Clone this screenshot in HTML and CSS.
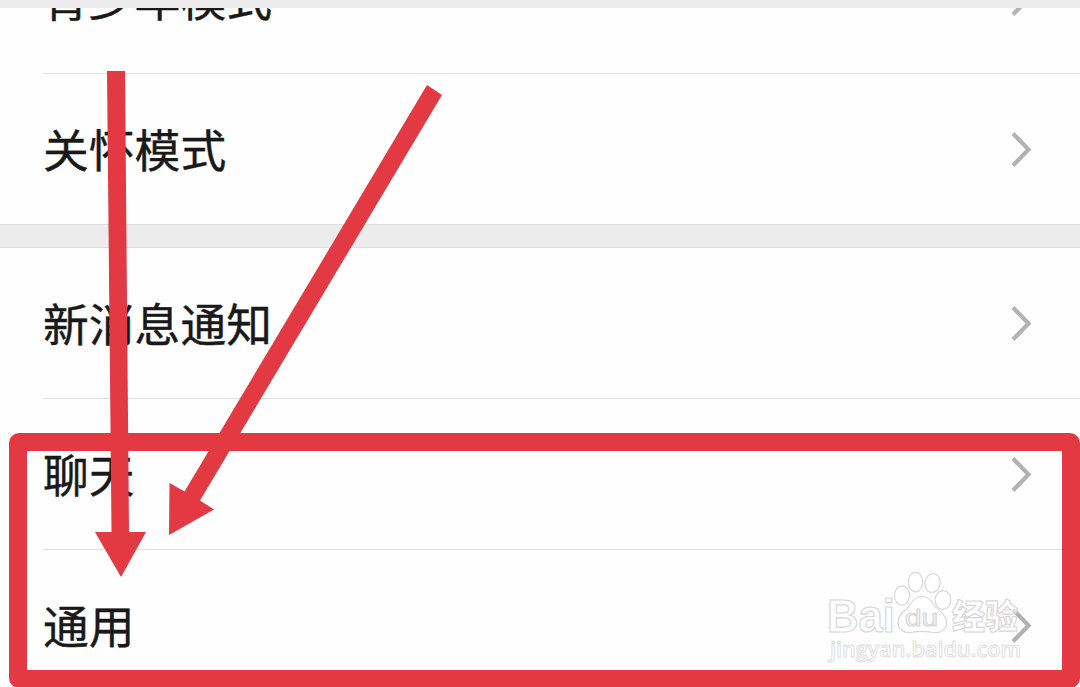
FILE: index.html
```html
<!DOCTYPE html>
<html lang="zh-CN">
<head>
    <meta charset="UTF-8">
    <meta name="viewport" content="width=device-width, initial-scale=1.0">
    <title>设置</title>
    <link rel="stylesheet" href="styles.css">
</head>
<body>

    <div class="screen">
        <div class="settings">
            <div class="group group-first">
                <div class="row">
                    <span class="label">青少年模式</span>
                    <svg class="arrow" viewBox="0 0 24 40"><path d="M4 4.500 L19.500 20.500 L4 36.500"/></svg>
                </div>
                <div class="row">
                    <span class="label">关怀模式</span>
                    <svg class="arrow" viewBox="0 0 24 40"><path d="M4 4.500 L19.500 20.500 L4 36.500"/></svg>
                </div>
            </div>

            <div class="group">
                <div class="row">
                    <span class="label">新消息通知</span>
                    <svg class="arrow" viewBox="0 0 24 40"><path d="M4 4.500 L19.500 20.500 L4 36.500"/></svg>
                </div>
                <div class="row">
                    <span class="label">聊天</span>
                    <svg class="arrow" viewBox="0 0 24 40"><path d="M4 4.500 L19.500 20.500 L4 36.500"/></svg>
                </div>
                <div class="row">
                    <span class="label">通用</span>
                    <svg class="arrow" viewBox="0 0 24 40"><path d="M4 4.500 L19.500 20.500 L4 36.500"/></svg>
                </div>
            </div>
        </div>

        <!-- watermark -->
        <svg class="watermark" viewBox="820 565 210 105">
            <text class="brand" x="827" y="632" textLength="68" lengthAdjust="spacingAndGlyphs">Bai</text>
            <g class="logo">
                <ellipse cx="902" cy="595.500" rx="7.500" ry="9.700"/>
                <ellipse cx="915.500" cy="582" rx="7.200" ry="9.800"/>
                <ellipse cx="932.500" cy="583" rx="7.600" ry="9.500" transform="rotate(10 932.500 583)"/>
                <ellipse cx="943" cy="600" rx="7.800" ry="9.300"/>
                <path d="M922 596.500 C928 596.500 931 600 934 605 C937 610 946 613 946.500 622 C947 630 940 633.500 933 632.500 C926 631 918 631 911 632.500 C904 633.500 898 629 898 622 C898 613 907 610 910 605 C913 600 916 596.500 922 596.500 Z"/>
            </g>
            <text class="du" x="905" y="626" textLength="33" lengthAdjust="spacingAndGlyphs">du</text>
            <text class="brand-cn" x="952" y="629" textLength="66" lengthAdjust="spacingAndGlyphs">经验</text>
            <text class="site" x="830" y="657" textLength="191" lengthAdjust="spacingAndGlyphs">jingyan.baidu.com</text>
        </svg>

        <!-- red frame and arrows -->
        <svg class="marks" viewBox="0 0 1080 687">
            <rect class="frame" x="18" y="442" width="1053" height="237" rx="1"/>
            <polygon points="107,71 125,71 129,532 146,532 121,577 95,532 111.500,532"/>
            <polygon points="427,85 442,95 200,500.500 214,509.500 169,535 169.500,483 184.500,491.500"/>
        </svg>
    </div>

</body>
</html>
```
FILE: styles.css
```css
body {
    font-family: "Noto Sans CJK SC", sans-serif;
    background-color: #ececec;
    margin: 0;
    padding: 0;
}

.screen {
    box-sizing: border-box;
    position: relative;
    height: 687px;
    padding-top: 8px;
    overflow: hidden;
}

.settings {
    height: 679px;
    overflow: hidden;
    display: flex;
    flex-direction: column;
    gap: 22px;
}

.group {
    flex: none;
    background-color: #fefefe;
    border-top: 1px solid #e0e0e0;
    border-bottom: 1px solid #e0e0e0;
}

.group-first {
    margin-top: -86px;
}

.row {
    box-sizing: border-box;
    height: 151px;
    margin-left: 43px;
    padding-right: 47px;
    display: flex;
    align-items: center;
    justify-content: space-between;
    border-bottom: 1px solid #e0e0e0;
}

.row:last-child {
    height: 150px;
    border-bottom: none;
}

.label {
    font-size: 45.8px;
    line-height: 60px;
    padding-bottom: 2px;
    color: #191919;
    -webkit-text-stroke: 0.4px #191919;
}

.arrow {
    width: 24px;
    height: 40px;
    fill: none;
    stroke: #b2b2b2;
    stroke-width: 4.2;
}

.watermark {
    position: absolute;
    left: 820px;
    top: 565px;
    width: 210px;
    height: 105px;
    fill: #fff;
    fill-opacity: 0.6;
    stroke: #d8d8d8;
    stroke-width: 1.2;
    stroke-linejoin: round;
}

.brand {
    font: bold 46px "Liberation Sans", sans-serif;
}

.du {
    font: 24px "Liberation Sans", sans-serif;
}

.brand-cn {
    font: 900 34px "Noto Sans CJK SC", sans-serif;
}

.site {
    font: 600 22px "Open Sans", sans-serif;
    stroke: #dedede;
    stroke-width: 1;
}

.marks {
    position: absolute;
    left: 0;
    top: 0;
    width: 1080px;
    height: 687px;
    fill: #e33943;
}

.marks .frame {
    fill: none;
    stroke: #e33943;
    stroke-width: 18;
    stroke-linejoin: round;
}
```
